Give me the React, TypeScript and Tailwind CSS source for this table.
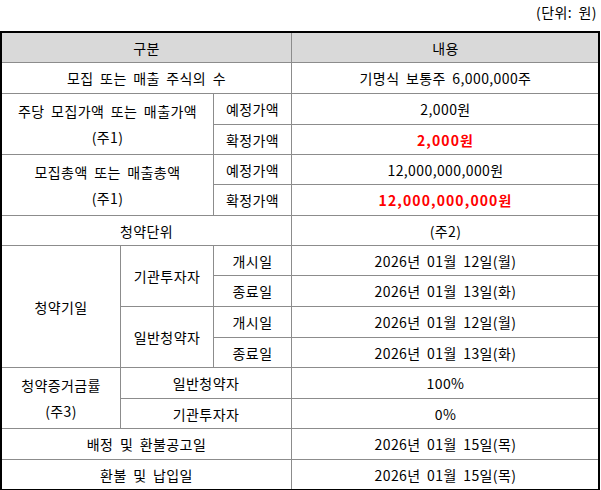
import React from "react";

const cell = "border border-[#8c8c8c] text-center align-middle p-0";
const red = "text-[#ff0000] font-bold tracking-[1.1px]";

export default function App() {
  return (
    <div
      className="w-[601px] h-[490px] bg-white text-black text-[14px] tracking-[0.4px] [word-spacing:3px]"
      style={{ fontFamily: '"Noto Sans CJK KR", "Noto Sans", sans-serif' }}
    >
      <div className="h-[31px] flex justify-end pr-[4px] pt-[3px] leading-[18px]">(단위: 원)</div>
      <div className="w-[600px] border-2 border-black overflow-hidden">
        <table className="w-[598px] -m-px border-collapse table-fixed leading-[26px]">
          <colgroup>
            <col className="w-[119px]" />
            <col className="w-[93px]" />
            <col className="w-[78px]" />
            <col className="w-[308px]" />
          </colgroup>
          <tbody>
            <tr className="h-[30px] bg-[#d9d9d9]">
              <td colSpan={3} className={cell}>구분</td>
              <td className={cell}>내용</td>
            </tr>
            <tr className="h-[31px]">
              <td colSpan={3} className={cell}>모집 또는 매출 주식의 수</td>
              <td className={cell}>기명식 보통주 6,000,000주</td>
            </tr>
            <tr className="h-[31px]">
              <td colSpan={2} rowSpan={2} className={cell}>
                주당 모집가액 또는 매출가액
                <br />
                (주1)
              </td>
              <td className={cell}>예정가액</td>
              <td className={cell}>2,000원</td>
            </tr>
            <tr className="h-[30px]">
              <td className={cell}>확정가액</td>
              <td className={`${cell} ${red}`}>2,000원</td>
            </tr>
            <tr className="h-[30px]">
              <td colSpan={2} rowSpan={2} className={cell}>
                모집총액 또는 매출총액
                <br />
                (주1)
              </td>
              <td className={cell}>예정가액</td>
              <td className={cell}>12,000,000,000원</td>
            </tr>
            <tr className="h-[31px]">
              <td className={cell}>확정가액</td>
              <td className={`${cell} ${red}`}>12,000,000,000원</td>
            </tr>
            <tr className="h-[30px]">
              <td colSpan={3} className={cell}>청약단위</td>
              <td className={cell}>(주2)</td>
            </tr>
            <tr className="h-[30px]">
              <td rowSpan={4} className={cell}>청약기일</td>
              <td rowSpan={2} className={cell}>기관투자자</td>
              <td className={cell}>개시일</td>
              <td className={cell}>2026년 01월 12일(월)</td>
            </tr>
            <tr className="h-[31px]">
              <td className={cell}>종료일</td>
              <td className={cell}>2026년 01월 13일(화)</td>
            </tr>
            <tr className="h-[31px]">
              <td rowSpan={2} className={cell}>일반청약자</td>
              <td className={cell}>개시일</td>
              <td className={cell}>2026년 01월 12일(월)</td>
            </tr>
            <tr className="h-[30px]">
              <td className={cell}>종료일</td>
              <td className={cell}>2026년 01월 13일(화)</td>
            </tr>
            <tr className="h-[31px]">
              <td rowSpan={2} className={cell}>
                청약증거금률
                <br />
                (주3)
              </td>
              <td colSpan={2} className={cell}>일반청약자</td>
              <td className={cell}>100%</td>
            </tr>
            <tr className="h-[30px]">
              <td colSpan={2} className={cell}>기관투자자</td>
              <td className={cell}>0%</td>
            </tr>
            <tr className="h-[31px]">
              <td colSpan={3} className={cell}>배정 및 환불공고일</td>
              <td className={cell}>2026년 01월 15일(목)</td>
            </tr>
            <tr className="h-[30px]">
              <td colSpan={3} className={cell}>환불 및 납입일</td>
              <td className={cell}>2026년 01월 15일(목)</td>
            </tr>
          </tbody>
        </table>
      </div>
    </div>
  );
}
